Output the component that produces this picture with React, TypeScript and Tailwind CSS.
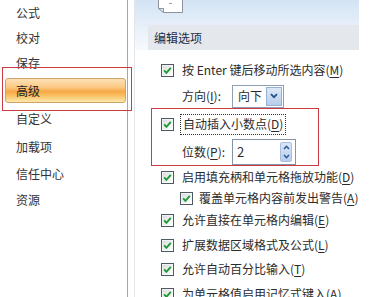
import React from 'react';

const Check = () => (
  <svg width="13" height="13" viewBox="0 0 13 13" className="shrink-0">
    <defs>
      <linearGradient id="cbg" x1="0" y1="0" x2="1" y2="1">
        <stop offset="0" stopColor="#d9dcdf" />
        <stop offset="1" stopColor="#ffffff" />
      </linearGradient>
    </defs>
    <rect x="0.5" y="0.5" width="12" height="12" fill="#fff" stroke="#4e5a62" />
    <rect x="1.5" y="1.5" width="10" height="10" fill="url(#cbg)" />
    <path d="M3.2 6.4L5.4 8.8L9.8 3.9" fill="none" stroke="#1e9a32" strokeWidth="1.9" />
  </svg>
);

const Key = ({ k }: { k: string }) => (
  <>
    (<u className="underline-offset-2">{k}</u>)
  </>
);

const navItems = [
  { name: '公式', h: 'h-[25px]' },
  { name: '校对', h: 'h-[25px]' },
  { name: '保存', h: 'h-[26px]' },
  { name: '高级', h: 'h-[25px]', active: true },
  { name: '自定义', h: 'h-[28px]' },
  { name: '加载项', h: 'h-[28px]' },
  { name: '信任中心', h: 'h-[25px]' },
  { name: '资源', h: 'h-[28px]' },
];

export default function App() {
  return (
    <div className="relative w-[385px] h-[297px] overflow-hidden bg-white flex font-['Noto_Sans_CJK_SC','Noto_Sans',sans-serif] text-[12px] leading-[14px] text-[#2b2b2b]">
      {/* left nav */}
      <div className="w-[128px] shrink-0 border-r border-[#a3a8a6] flex flex-col">
        {navItems.map(item =>
          item.active ? (
            <div
              key={item.name}
              className={`${item.h} my-[2px] ml-[5px] w-[121px] flex items-center pl-[10px] rounded-[3px] border border-[#cfa468] bg-[linear-gradient(to_bottom,#fde2b8_0%,#fbc985_35%,#f7a845_55%,#f9c46a_75%,#fde9ac_100%)] text-[#222]`}
            >
              {item.name}
            </div>
          ) : (
            <div key={item.name} className={`${item.h} flex items-center pl-[16px] text-[#333]`}>
              {item.name}
            </div>
          )
        )}
      </div>

      {/* gap strip */}
      <div className="w-[7px] shrink-0 border-r border-[#e2e6ea]" />

      {/* right content */}
      <div className="w-[224px] shrink-0 flex flex-col">
        <div className="h-[50px] flex flex-col bg-linear-to-b from-[#d3e3f4] via-[#e6eff9] to-[#f7fafd]">
          <div className="h-[25px]">
            <svg width="25" height="13" viewBox="0 0 25 13" className="ml-[23px]">
              <path d="M0.5 0V8.5H5.5V12.5H24.5V0" fill="#fff" stroke="#8d939a" />
              <path d="M0.5 8.5L5.5 12.5" fill="none" stroke="#8d939a" />
              <path d="M11 3.5H14" stroke="#9aa0a6" />
            </svg>
          </div>
          <div className="h-[25px] ml-[13px] bg-[#e4e8ed] flex items-center pl-[6px] text-[#1d2d45]">编辑选项</div>
        </div>

        <div className="flex flex-col pl-[26px] mt-[8px]">
          <div className="h-[24px] flex items-center gap-[8px]">
            <Check />
            <span>按 Enter 键后移动所选内容<Key k="M" /></span>
          </div>
          <div className="h-[24px] flex items-center mt-[2px] pl-[21px]">
            <span className="w-[50px]">方向<Key k="I" />:</span>
            <div className="h-[23px] w-[52px] border border-[#8f9eb0] bg-white flex items-center pl-[5px] pr-[1px]">
              <span className="flex-1">向下</span>
              <div className="w-[16px] h-[19px] border border-[#98b1d3] bg-linear-to-b from-[#dce8f8] to-[#b7cdec] flex items-center justify-center">
                <svg width="8" height="6" viewBox="0 0 8 6">
                  <path d="M1 1.2L4 4.2L7 1.2" fill="none" stroke="#23508f" strokeWidth="1.8" />
                </svg>
              </div>
            </div>
          </div>
        </div>

        {/* highlighted group */}
        <div className="ml-[16px] w-[168px] h-[62px] border border-[#cc3a42] flex flex-col pl-[9px] pt-[4px]">
          <div className="h-[22px] flex items-center gap-[6px]">
            <Check />
            <span className="h-[21px] flex items-center px-[2px] border border-dotted border-[#333]">
              自动插入小数点<Key k="D" />
            </span>
          </div>
          <div className="h-[26px] mt-[4px] flex items-center pl-[21px]">
            <span className="w-[50px]">位数<Key k="P" />:</span>
            <div className="h-[26px] w-[64px] border border-[#8394a6] bg-white flex items-center pl-[4px] pr-[3px]">
              <span className="flex-1 text-[13px]">2</span>
              <div className="w-[12px] h-[20px] flex flex-col rounded-[2px] bg-linear-to-b from-[#d9e6f7] to-[#b9cfee] border border-[#a9bfdd]">
                <div className="flex-1 flex items-center justify-center">
                  <svg width="7" height="5" viewBox="0 0 7 5">
                    <path d="M1 4L3.5 1.3L6 4" fill="none" stroke="#2a5696" strokeWidth="1.5" />
                  </svg>
                </div>
                <div className="flex-1 flex items-center justify-center">
                  <svg width="7" height="5" viewBox="0 0 7 5">
                    <path d="M1 1L3.5 3.7L6 1" fill="none" stroke="#2a5696" strokeWidth="1.5" />
                  </svg>
                </div>
              </div>
            </div>
          </div>
        </div>

        <div className="flex flex-col pl-[26px]">
          <div className="h-[22px] flex items-center gap-[8px]">
            <Check />
            <span>启用填充柄和单元格拖放功能<Key k="D" /></span>
          </div>
          <div className="h-[20px] flex items-center gap-[6px] pl-[19px]">
            <Check />
            <span className="whitespace-nowrap">覆盖单元格内容前发出警告<Key k="A" /></span>
          </div>
          <div className="h-[24px] flex items-center gap-[8px]">
            <Check />
            <span>允许直接在单元格内编辑<Key k="E" /></span>
          </div>
          <div className="h-[26px] flex items-center gap-[8px]">
            <Check />
            <span>扩展数据区域格式及公式<Key k="L" /></span>
          </div>
          <div className="h-[22px] flex items-center gap-[8px]">
            <Check />
            <span>允许自动百分比输入<Key k="T" /></span>
          </div>
          <div className="h-[28px] flex items-center gap-[8px]">
            <Check />
            <span>为单元格值启用记忆式键入<Key k="A" /></span>
          </div>
        </div>
      </div>

      {/* annotation around the selected nav item */}
      <div className="absolute left-[2px] top-[67px] w-[130px] h-[44px] border border-[#cc3a42] pointer-events-none" />
    </div>
  );
}
